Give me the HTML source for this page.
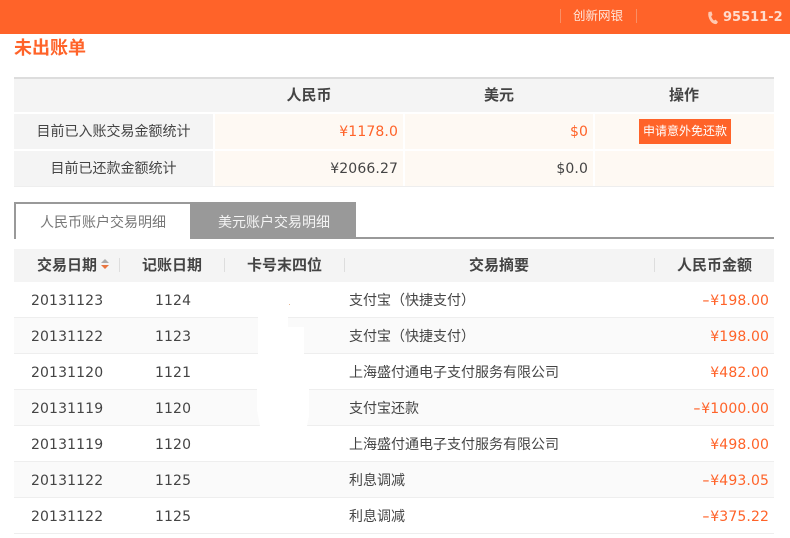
<!DOCTYPE html>
<html><head><meta charset="utf-8">
<style>
html,body{margin:0;padding:0;background:#fff}
body{width:790px;height:538px;position:relative;overflow:hidden;font-family:"DejaVu Sans","WenQuanYi Zen Hei","Noto Sans CJK SC",sans-serif;color:#444;font-size:14px}
.a{position:absolute;white-space:nowrap}
.c{text-align:center}.r{text-align:right}
.o{color:#ff6329}
.b{font-weight:bold}
.t{font-size:15px;font-weight:bold}
.n{letter-spacing:.12px}
.m{display:inline-block;width:8px;text-align:center;transform:scaleX(1.5)}
</style></head><body>
<div class="a" style="left:0;top:0;width:790px;height:34px;background:#ff6329"></div>
<div class="a" style="left:560px;top:9px;width:1px;height:14px;background:#f98f66"></div>
<div class="a" style="left:636px;top:9px;width:1px;height:14px;background:#f98f66"></div>
<div class="a" style="left:573px;top:8px;font-size:12.5px;line-height:16px;color:#ffe6da">创新网银</div>
<svg class="a" style="left:707px;top:11px" width="12" height="14" viewBox="0 0 12 14"><path d="M1.5 1 L4.5 0.5 L5.5 4 L4.2 5.2 Q5 8 7 9.5 L8.6 8.6 L11 11 L9.5 13 Q6 13.5 3.5 10 Q0.5 5.5 1.5 1Z" fill="#ffc9b2"/></svg>
<div class="a b" style="left:723px;top:9px;font-size:13px;line-height:17px;color:#ffdccd">95511-2</div>

<div class="a o b" style="left:14px;top:38px;font-size:18px;line-height:22px">未出账单</div>

<div class="a" style="left:14px;top:77px;width:760px;height:2px;background:#ddd"></div>
<div class="a" style="left:14px;top:79px;width:760px;height:33px;background:#f4f4f4"></div>
<div class="a c t" style="left:215px;top:79px;width:188px;line-height:33px">人民币</div>
<div class="a c t" style="left:405px;top:79px;width:188px;line-height:33px">美元</div>
<div class="a c t" style="left:595px;top:79px;width:178px;line-height:33px">操作</div>

<div class="a c" style="left:14px;top:114px;width:199px;height:35px;line-height:36px;background:#f4f4f4">目前已入账交易金额统计</div>
<div class="a r o n" style="left:215px;top:114px;width:183px;padding-right:5px;height:35px;line-height:37px;background:#fef9f3">¥1178.0</div>
<div class="a r o n" style="left:405px;top:114px;width:183px;padding-right:5px;height:35px;line-height:37px;background:#fef9f3">$0</div>
<div class="a" style="left:595px;top:114px;width:179px;height:35px;background:#fef9f3"></div>
<div class="a c" style="left:639px;top:119px;width:92px;height:25px;line-height:25px;background:#ff6329;color:#fff;font-size:12px">申请意外免还款</div>

<div class="a c" style="left:14px;top:151px;width:199px;height:35px;line-height:36px;background:#f4f4f4">目前已还款金额统计</div>
<div class="a r n" style="left:215px;top:151px;width:183px;padding-right:5px;height:35px;line-height:37px;background:#fef9f3">¥2066.27</div>
<div class="a r n" style="left:405px;top:151px;width:183px;padding-right:5px;height:35px;line-height:37px;background:#fef9f3">$0.0</div>
<div class="a" style="left:595px;top:151px;width:179px;height:35px;background:#fef9f3"></div>
<div class="a" style="left:14px;top:186px;width:760px;height:1px;background:#eee"></div>

<div class="a" style="left:356px;top:237px;width:418px;height:2px;background:#999"></div>
<div class="a" style="left:14px;top:202px;width:176px;height:2px;background:#999"></div>
<div class="a" style="left:14px;top:202px;width:2px;height:37px;background:#999"></div>
<div class="a" style="left:40px;top:214px;line-height:18px;color:#777">人民币账户交易明细</div>
<div class="a" style="left:190px;top:202px;width:166px;height:37px;background:#999"></div>
<div class="a" style="left:218px;top:214px;line-height:18px;color:#f4f4f4">美元账户交易明细</div>

<div class="a" style="left:14px;top:249px;width:760px;height:33px;background:#f4f4f4"></div>
<div class="a t" style="left:37px;top:249px;line-height:33px">交易日期</div>
<div class="a" style="left:101px;top:259px;width:0;height:0;border-left:4px solid transparent;border-right:4px solid transparent;border-bottom:4px solid #aaa"></div>
<div class="a" style="left:101px;top:265px;width:0;height:0;border-left:4px solid transparent;border-right:4px solid transparent;border-top:4px solid #e9753f"></div>
<div class="a" style="left:119px;top:258px;width:1px;height:14px;background:#ddd"></div>
<div class="a t" style="left:142px;top:249px;line-height:33px">记账日期</div>
<div class="a" style="left:224px;top:258px;width:1px;height:14px;background:#ddd"></div>
<div class="a t" style="left:247px;top:249px;line-height:33px">卡号末四位</div>
<div class="a" style="left:344px;top:258px;width:1px;height:14px;background:#ddd"></div>
<div class="a t" style="left:469px;top:249px;line-height:33px">交易摘要</div>
<div class="a" style="left:654px;top:258px;width:1px;height:14px;background:#ddd"></div>
<div class="a t" style="left:677px;top:249px;line-height:33px">人民币金额</div>

<div class="a" style="left:14px;top:317px;width:760px;height:1px;background:#eee"></div>
<div class="a n" style="left:31px;top:283px;line-height:36px">20131123</div>
<div class="a n" style="left:155px;top:283px;line-height:36px">1124</div>
<div class="a" style="left:349px;top:283px;line-height:36px">支付宝（快捷支付）</div>
<div class="a r o n" style="left:600px;top:283px;width:169px;line-height:36px"><span class="m">-</span>¥198.00</div>

<div class="a" style="left:14px;top:318px;width:760px;height:35px;background:#fafafa"></div>
<div class="a" style="left:14px;top:353px;width:760px;height:1px;background:#eee"></div>
<div class="a n" style="left:31px;top:319px;line-height:36px">20131122</div>
<div class="a n" style="left:155px;top:319px;line-height:36px">1123</div>
<div class="a" style="left:349px;top:319px;line-height:36px">支付宝（快捷支付）</div>
<div class="a r o n" style="left:600px;top:319px;width:169px;line-height:36px">¥198.00</div>

<div class="a" style="left:14px;top:389px;width:760px;height:1px;background:#eee"></div>
<div class="a n" style="left:31px;top:355px;line-height:36px">20131120</div>
<div class="a n" style="left:155px;top:355px;line-height:36px">1121</div>
<div class="a" style="left:349px;top:355px;line-height:36px">上海盛付通电子支付服务有限公司</div>
<div class="a r o n" style="left:600px;top:355px;width:169px;line-height:36px">¥482.00</div>

<div class="a" style="left:14px;top:390px;width:760px;height:35px;background:#fafafa"></div>
<div class="a" style="left:14px;top:425px;width:760px;height:1px;background:#eee"></div>
<div class="a n" style="left:31px;top:391px;line-height:36px">20131119</div>
<div class="a n" style="left:155px;top:391px;line-height:36px">1120</div>
<div class="a" style="left:349px;top:391px;line-height:36px">支付宝还款</div>
<div class="a r o n" style="left:600px;top:391px;width:169px;line-height:36px"><span class="m">-</span>¥1000.00</div>

<div class="a" style="left:14px;top:461px;width:760px;height:1px;background:#eee"></div>
<div class="a n" style="left:31px;top:427px;line-height:36px">20131119</div>
<div class="a n" style="left:155px;top:427px;line-height:36px">1120</div>
<div class="a" style="left:349px;top:427px;line-height:36px">上海盛付通电子支付服务有限公司</div>
<div class="a r o n" style="left:600px;top:427px;width:169px;line-height:36px">¥498.00</div>

<div class="a" style="left:14px;top:462px;width:760px;height:35px;background:#fafafa"></div>
<div class="a" style="left:14px;top:497px;width:760px;height:1px;background:#eee"></div>
<div class="a n" style="left:31px;top:463px;line-height:36px">20131122</div>
<div class="a n" style="left:155px;top:463px;line-height:36px">1125</div>
<div class="a" style="left:349px;top:463px;line-height:36px">利息调减</div>
<div class="a r o n" style="left:600px;top:463px;width:169px;line-height:36px"><span class="m">-</span>¥493.05</div>

<div class="a" style="left:14px;top:533px;width:760px;height:1px;background:#eee"></div>
<div class="a n" style="left:31px;top:499px;line-height:36px">20131122</div>
<div class="a n" style="left:155px;top:499px;line-height:36px">1125</div>
<div class="a" style="left:349px;top:499px;line-height:36px">利息调减</div>
<div class="a r o n" style="left:600px;top:499px;width:169px;line-height:36px"><span class="m">-</span>¥375.22</div>

<svg class="a" style="left:250px;top:310px" width="70" height="130"><path d="M8 7 H38 V17 H54 V44 H8Z M7 79 H59 L59 106 L57 116 H10 L7 100Z" fill="#fff"/></svg>
<div class="a" style="left:289px;top:304px;width:1px;height:1px;background:#e8b795"></div>
</body></html>
